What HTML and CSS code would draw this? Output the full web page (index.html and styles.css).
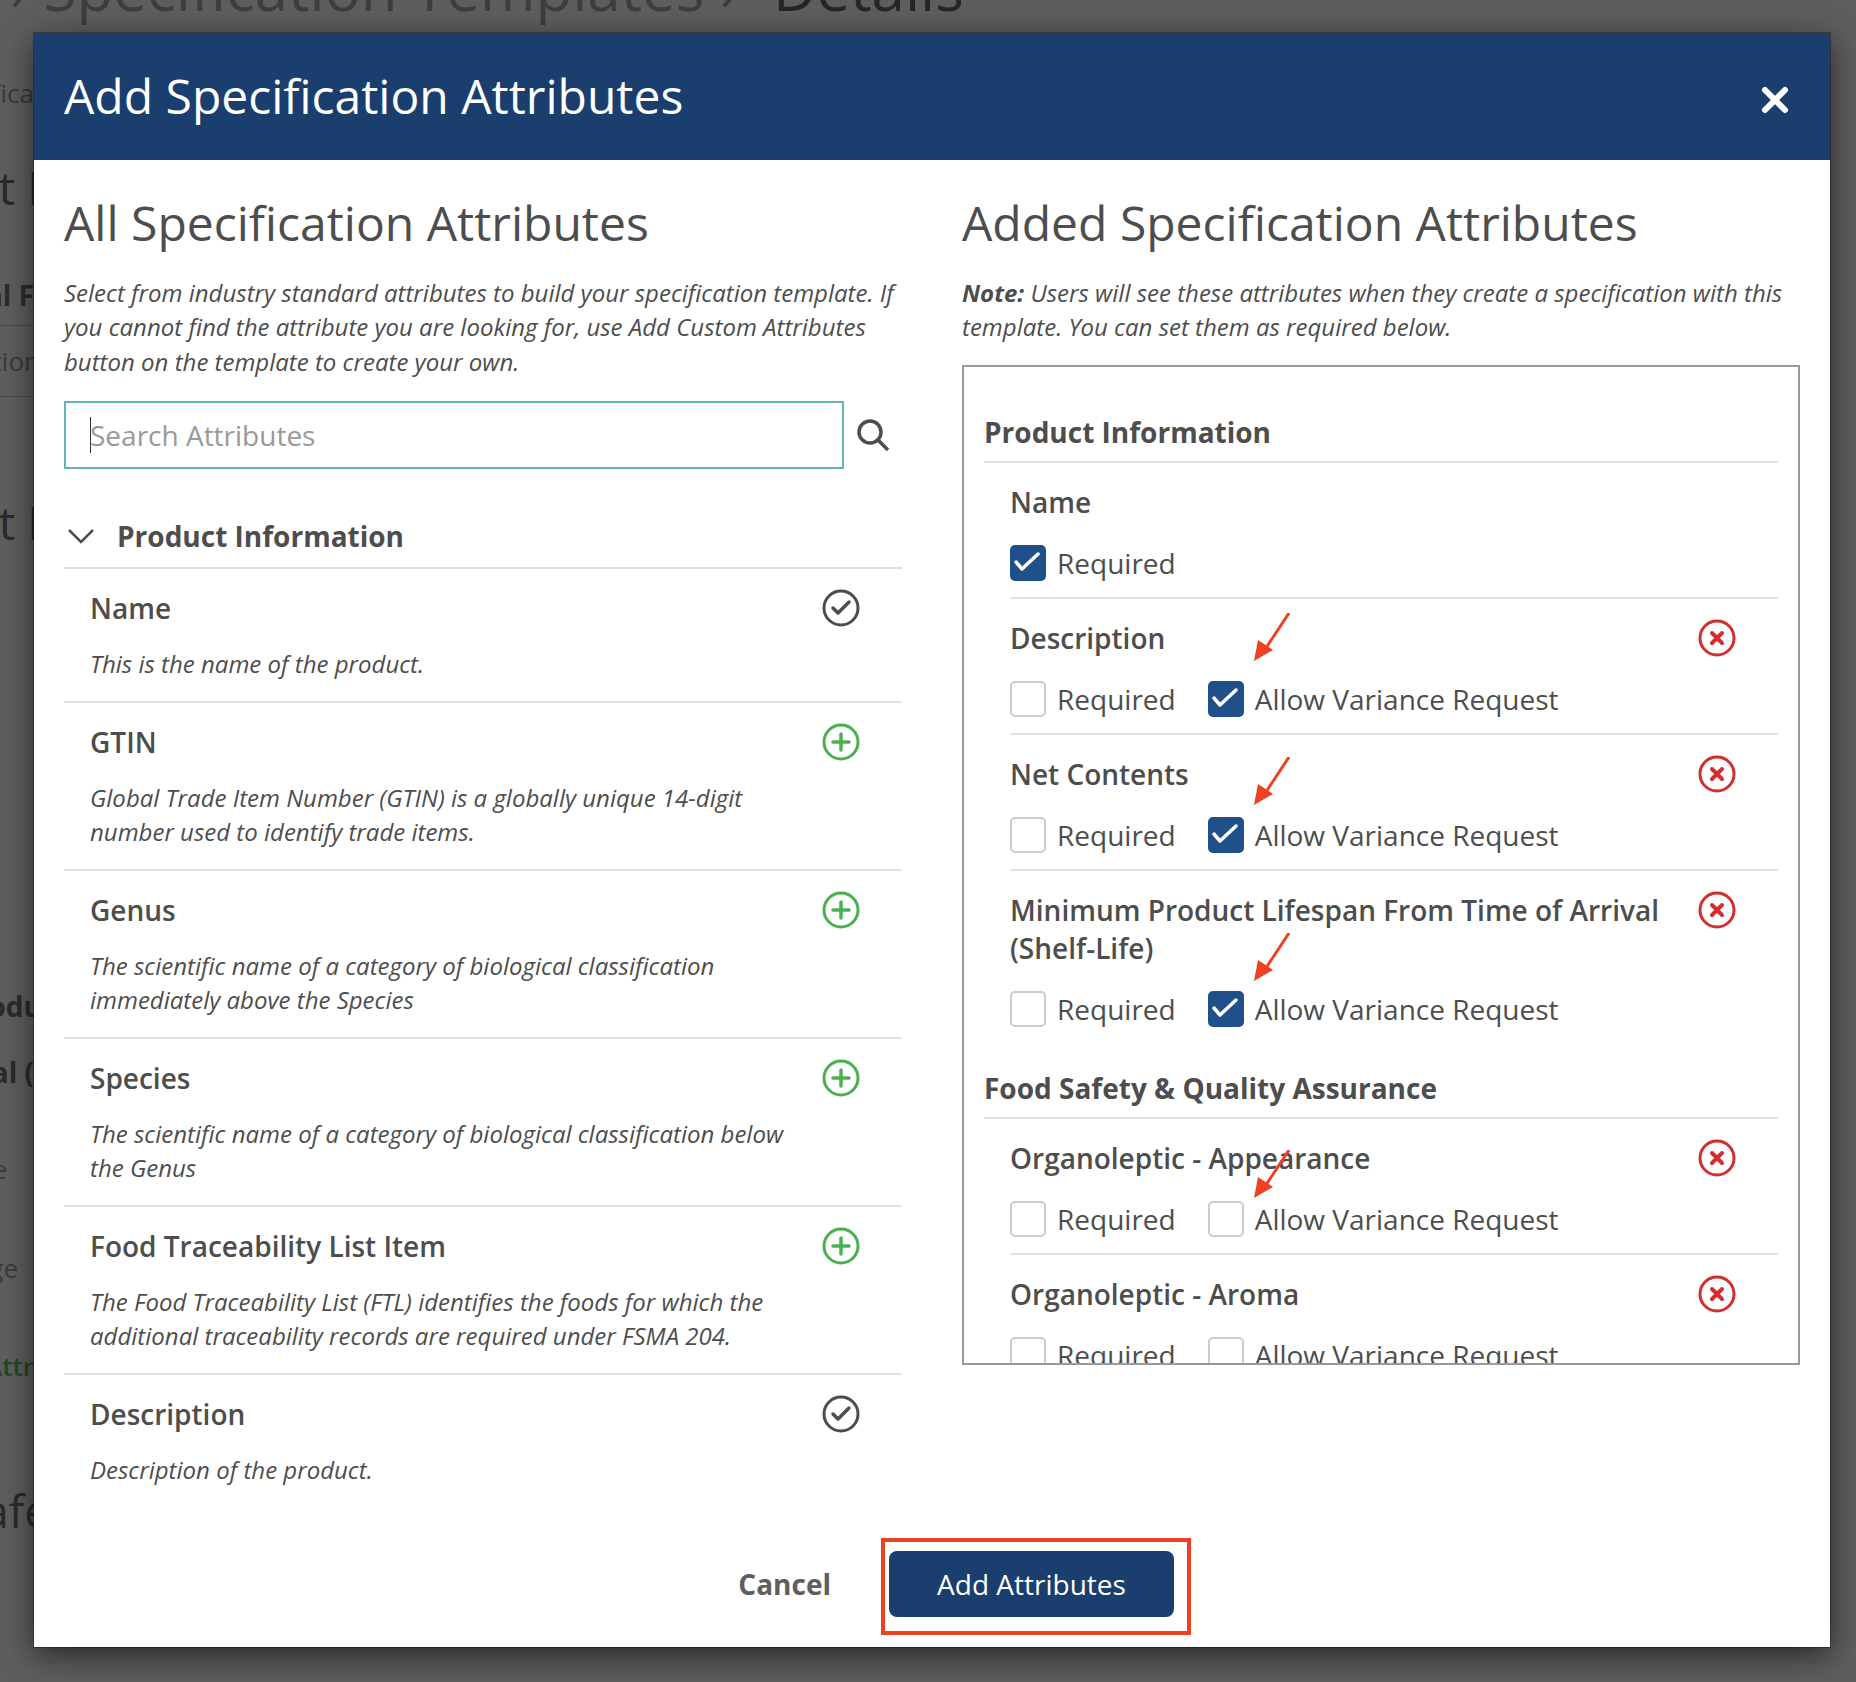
FILE: index.html
```html
<!DOCTYPE html>
<html lang="en">

<head>
    <meta charset="UTF-8">
    <title>Add Specification Attributes</title>
    <link rel="stylesheet" href="styles.css">
</head>

<body>

    <!-- Page behind the dialog -->
    <div class="page-top">
        <span class="crumb">› Specification Templates ›</span>
        <span class="crumb crumb-last">Details</span>
    </div>

    <div class="page-main">
        <div class="page-strip">
            <div class="strip-row strip-1">ifica</div>
            <div class="strip-row strip-2 strip-big">t I</div>
            <div class="strip-row strip-3 strip-bold">al F</div>
            <div class="strip-row strip-4">tion</div>
            <div class="strip-row strip-5 strip-big">t I</div>
            <div class="strip-row strip-6 strip-bold">odu</div>
            <div class="strip-row strip-7 strip-bold">al (</div>
            <div class="strip-row strip-8">e</div>
            <div class="strip-row strip-9">ge</div>
            <div class="strip-row strip-10 strip-green">Attr</div>
            <div class="strip-row strip-11 strip-big">afe</div>
        </div>

        <!-- Dialog -->
        <div class="modal">
            <div class="modal-header">
                <h1>Add Specification Attributes</h1>
                <svg class="close-icon" viewBox="0 0 28 28">
                    <path d="M4 4 L24 24 M24 4 L4 24" />
                </svg>
            </div>

            <div class="modal-body">
                <div class="column">
                    <h2>All Specification Attributes</h2>
                    <p class="intro">Select from industry standard attributes to build your specification template. If you cannot find the attribute you are looking for, use Add Custom Attributes button on the template to create your own.</p>

                    <div class="search-row">
                        <div class="search-box"><span class="caret"></span>Search Attributes</div>
                        <svg class="search-icon" viewBox="0 0 34 34">
                            <circle cx="14" cy="14" r="11" />
                            <path d="M22 22 L32 32" />
                        </svg>
                    </div>

                    <div class="group-title">
                        <svg class="chevron" viewBox="0 0 28 16">
                            <path d="M2 2 L14 14 L26 2" />
                        </svg>
                        <span>Product Information</span>
                    </div>

                    <div class="attr">
                        <div class="attr-text">
                            <div class="attr-name">Name</div>
                            <div class="attr-desc">This is the name of the product.</div>
                        </div>
                        <svg class="round-icon icon-added" viewBox="0 0 38 38">
                            <circle cx="19" cy="19" r="17" />
                            <path d="M11 19 L16 24 L27 13" />
                        </svg>
                    </div>
                    <div class="attr">
                        <div class="attr-text">
                            <div class="attr-name">GTIN</div>
                            <div class="attr-desc">Global Trade Item Number (GTIN) is a globally unique 14-digit number used to identify trade items.</div>
                        </div>
                        <svg class="round-icon icon-add" viewBox="0 0 38 38">
                            <circle cx="19" cy="19" r="17" />
                            <path d="M19 11 V27 M11 19 H27" />
                        </svg>
                    </div>
                    <div class="attr">
                        <div class="attr-text">
                            <div class="attr-name">Genus</div>
                            <div class="attr-desc">The scientific name of a category of biological classification immediately above the Species</div>
                        </div>
                        <svg class="round-icon icon-add" viewBox="0 0 38 38">
                            <circle cx="19" cy="19" r="17" />
                            <path d="M19 11 V27 M11 19 H27" />
                        </svg>
                    </div>
                    <div class="attr">
                        <div class="attr-text">
                            <div class="attr-name">Species</div>
                            <div class="attr-desc">The scientific name of a category of biological classification below the Genus</div>
                        </div>
                        <svg class="round-icon icon-add" viewBox="0 0 38 38">
                            <circle cx="19" cy="19" r="17" />
                            <path d="M19 11 V27 M11 19 H27" />
                        </svg>
                    </div>
                    <div class="attr">
                        <div class="attr-text">
                            <div class="attr-name">Food Traceability List Item</div>
                            <div class="attr-desc">The Food Traceability List (FTL) identifies the foods for which the additional traceability records are required under FSMA 204.</div>
                        </div>
                        <svg class="round-icon icon-add" viewBox="0 0 38 38">
                            <circle cx="19" cy="19" r="17" />
                            <path d="M19 11 V27 M11 19 H27" />
                        </svg>
                    </div>
                    <div class="attr attr-last">
                        <div class="attr-text">
                            <div class="attr-name">Description</div>
                            <div class="attr-desc">Description of the product.</div>
                        </div>
                        <svg class="round-icon icon-added" viewBox="0 0 38 38">
                            <circle cx="19" cy="19" r="17" />
                            <path d="M11 19 L16 24 L27 13" />
                        </svg>
                    </div>
                </div>

                <div class="column">
                    <h2>Added Specification Attributes</h2>
                    <p class="intro"><b>Note:</b> Users will see these attributes when they create a specification with this template. You can set them as required below.</p>

                    <div class="added-box">
                        <div class="added-group">Product Information</div>

                        <div class="added">
                            <div class="added-name">Name</div>
                            <div class="checks">
                                <span class="check check-on"><svg viewBox="0 0 32 32"><path d="M4 15 L10 22 L26 7" /></svg></span>
                                <span class="check-label">Required</span>
                            </div>
                        </div>

                        <div class="added">
                            <svg class="arrow" viewBox="0 0 36 48"><path class="arrow-line" d="M35 0 L10 38" /><path class="arrow-head" d="M0 48 L4 27 L19 37 Z" /></svg>
                            <div class="added-name">Description</div>
                            <svg class="round-icon icon-remove" viewBox="0 0 38 38"><circle cx="19" cy="19" r="17" /><path d="M14 14 L24 24 M24 14 L14 24" /></svg>
                            <div class="checks">
                                <span class="check"></span>
                                <span class="check-label">Required</span>
                                <span class="check check-on"><svg viewBox="0 0 32 32"><path d="M4 15 L10 22 L26 7" /></svg></span>
                                <span class="check-label">Allow Variance Request</span>
                            </div>
                        </div>

                        <div class="added">
                            <svg class="arrow arrow-low" viewBox="0 0 36 48"><path class="arrow-line" d="M35 0 L10 38" /><path class="arrow-head" d="M0 48 L4 27 L19 37 Z" /></svg>
                            <div class="added-name">Net Contents</div>
                            <svg class="round-icon icon-remove" viewBox="0 0 38 38"><circle cx="19" cy="19" r="17" /><path d="M14 14 L24 24 M24 14 L14 24" /></svg>
                            <div class="checks">
                                <span class="check"></span>
                                <span class="check-label">Required</span>
                                <span class="check check-on"><svg viewBox="0 0 32 32"><path d="M4 15 L10 22 L26 7" /></svg></span>
                                <span class="check-label">Allow Variance Request</span>
                            </div>
                        </div>

                        <div class="added added-end">
                            <svg class="arrow arrow-long" viewBox="0 0 36 48"><path class="arrow-line" d="M35 0 L10 38" /><path class="arrow-head" d="M0 48 L4 27 L19 37 Z" /></svg>
                            <div class="added-name">Minimum Product Lifespan From Time of Arrival (Shelf-Life)</div>
                            <svg class="round-icon icon-remove" viewBox="0 0 38 38"><circle cx="19" cy="19" r="17" /><path d="M14 14 L24 24 M24 14 L14 24" /></svg>
                            <div class="checks">
                                <span class="check"></span>
                                <span class="check-label">Required</span>
                                <span class="check check-on"><svg viewBox="0 0 32 32"><path d="M4 15 L10 22 L26 7" /></svg></span>
                                <span class="check-label">Allow Variance Request</span>
                            </div>
                        </div>

                        <div class="added-group">Food Safety &amp; Quality Assurance</div>

                        <div class="added">
                            <svg class="arrow arrow-top" viewBox="0 0 36 48"><path class="arrow-line" d="M35 0 L10 38" /><path class="arrow-head" d="M0 48 L4 27 L19 37 Z" /></svg>
                            <div class="added-name">Organoleptic - Appearance</div>
                            <svg class="round-icon icon-remove" viewBox="0 0 38 38"><circle cx="19" cy="19" r="17" /><path d="M14 14 L24 24 M24 14 L14 24" /></svg>
                            <div class="checks">
                                <span class="check"></span>
                                <span class="check-label">Required</span>
                                <span class="check"></span>
                                <span class="check-label">Allow Variance Request</span>
                            </div>
                        </div>

                        <div class="added">
                            <div class="added-name">Organoleptic - Aroma</div>
                            <svg class="round-icon icon-remove" viewBox="0 0 38 38"><circle cx="19" cy="19" r="17" /><path d="M14 14 L24 24 M24 14 L14 24" /></svg>
                            <div class="checks">
                                <span class="check"></span>
                                <span class="check-label">Required</span>
                                <span class="check"></span>
                                <span class="check-label">Allow Variance Request</span>
                            </div>
                        </div>
                    </div>
                </div>
            </div>

            <div class="modal-footer">
                <span class="cancel">Cancel</span>
                <span class="add-wrap">
                    <span class="add-button">Add Attributes</span>
                    <span class="red-frame"></span>
                </span>
            </div>
        </div>
    </div>

</body>

</html>
```

FILE: styles.css
```css
* {
    margin: 0;
    padding: 0;
    box-sizing: border-box;
}

body {
    font-family: 'Open Sans', 'Noto Sans', sans-serif;
    background: #5e5e5e;
    color: #4d4d4d;
    width: 1856px;
    height: 1682px;
    overflow: hidden;
}

/* background page */
.page-top {
    height: 33px;
    overflow: hidden;
    display: flex;
    gap: 35px;
    align-items: flex-end;
    padding-left: 10px;
    font-size: 60px;
    line-height: 60px;
    color: #3e3e3e;
}

.crumb {
    margin-bottom: 15px;
    white-space: nowrap;
}

.crumb-last {
    color: #262626;
}

.page-main {
    display: flex;
}

.page-strip {
    width: 34px;
    height: 1649px;
    overflow: hidden;
    display: flex;
    flex-direction: column;
    color: #3a3a3a;
    font-size: 26px;
    white-space: nowrap;
}

.strip-row {
    display: flex;
    justify-content: flex-end;
    line-height: 36px;
}

.strip-big {
    font-size: 46px;
    line-height: 60px;
    color: #2a2a2a;
}

.strip-bold {
    font-size: 28px;
    font-weight: 700;
    color: #2b2b2b;
}

.strip-green {
    color: #24471f;
    font-weight: 600;
}

.strip-1 { margin-top: 42px; }
.strip-2 { margin-top: 46px; margin-right: -6px; }
.strip-3 { margin-top: 60px; padding-bottom: 12px; border-bottom: 1px solid #4a4a4a; }
.strip-4 { margin-top: 17px; margin-right: -6px; padding-bottom: 17px; border-bottom: 1px solid #4a4a4a; }
.strip-5 { margin-top: 95px; margin-right: -6px; }
.strip-6 { margin-top: 436px; margin-right: -8px; }
.strip-7 { margin-top: 30px; }
.strip-8 { margin-top: 61px; margin-right: 27px; }
.strip-9 { margin-top: 63px; margin-right: 16px; }
.strip-10 { margin-top: 62px; }
.strip-11 { margin-top: 96px; margin-right: -16px; }

/* dialog */
.modal {
    width: 1796px;
    height: 1614px;
    background: #fff;
    box-shadow: 0 0 0 1px rgba(0, 0, 0, 0.3), 0 8px 30px rgba(0, 0, 0, 0.6);
    display: flex;
    flex-direction: column;
}

.modal-header {
    height: 127px;
    background: #1a3e6e;
    color: #fff;
    display: flex;
    align-items: center;
    justify-content: space-between;
    padding: 0 41px 2px 30px;
}

.modal-header h1 {
    font-size: 48px;
    font-weight: 400;
}

.close-icon {
    width: 28px;
    height: 28px;
    margin-top: 8px;
    fill: none;
    stroke: #fff;
    stroke-width: 6;
    stroke-linecap: round;
}

.modal-body {
    height: 1366px;
    display: flex;
    gap: 60px;
    padding: 31px 30px 0;
}

.column {
    width: 838px;
}

h2 {
    font-size: 48px;
    font-weight: 400;
    line-height: 64px;
    margin-bottom: 21px;
}

.intro {
    font-size: 24px;
    font-style: italic;
    line-height: 34.3px;
}

.search-row {
    display: flex;
    align-items: center;
    margin-top: 22px;
}

.search-box {
    width: 780px;
    height: 68px;
    border: 2px solid #5fb6b4;
    display: flex;
    align-items: center;
    padding-left: 24px;
    font-size: 28px;
    color: #999;
    position: relative;
}

.caret {
    position: absolute;
    left: 24px;
    top: 14px;
    width: 1px;
    height: 36px;
    background: #333;
}

.search-icon {
    width: 34px;
    height: 34px;
    margin-left: 12px;
    fill: none;
    stroke: #4d4d4d;
    stroke-width: 3.5;
}

.group-title {
    display: flex;
    align-items: center;
    height: 63px;
    margin-top: 37px;
    border-bottom: 2px solid #e0e0e0;
    font-size: 28px;
    font-weight: 700;
}

.chevron {
    width: 28px;
    height: 16px;
    margin: 0 22px 0 3px;
    fill: none;
    stroke: #4d4d4d;
    stroke-width: 2.5;
}

.attr {
    display: flex;
    justify-content: space-between;
    align-items: flex-start;
    padding: 20px 42px 20px 26px;
    border-bottom: 2px solid #e0e0e0;
}

.attr-last {
    border-bottom: none;
}

.attr-text {
    width: 700px;
}

.attr-name {
    font-size: 28px;
    font-weight: 600;
    line-height: 38px;
    margin-bottom: 20px;
}

.attr-desc {
    font-size: 24px;
    font-style: italic;
    line-height: 34px;
}

.round-icon {
    width: 38px;
    height: 38px;
    flex-shrink: 0;
    fill: none;
    stroke-width: 3;
    stroke-linecap: round;
    stroke-linejoin: round;
}

.icon-added {
    stroke: #4d4d4d;
}

.icon-added path {
    stroke-width: 3.5;
}

.icon-add {
    stroke: #4caf50;
}

.icon-add path {
    stroke-width: 3.5;
}

.icon-remove {
    stroke: #d32f2f;
}

.icon-remove path {
    stroke-width: 4;
}

/* added attributes box */
.added-box {
    margin-top: 20px;
    height: 1000px;
    border: 2px solid #999;
    overflow: hidden;
    padding: 46px 20px 0 20px;
}

.added-group {
    font-size: 28px;
    font-weight: 700;
    line-height: 38px;
    padding-bottom: 10px;
    border-bottom: 2px solid #e0e0e0;
}

.added {
    position: relative;
    margin-left: 26px;
    padding: 20px 42px 0 0;
    display: grid;
    grid-template-columns: 1fr 38px;
    border-bottom: 2px solid #e0e0e0;
}

.added-end {
    border-bottom: none;
    padding-bottom: 26px;
}

.added-name {
    font-size: 28px;
    font-weight: 600;
    line-height: 38px;
}

.checks {
    grid-column: 1 / 3;
    display: flex;
    align-items: center;
    height: 36px;
    margin: 24px 0 16px;
}

.check {
    width: 36px;
    height: 36px;
    border: 2px solid #ccc;
    border-radius: 5px;
    margin-right: 11px;
    flex-shrink: 0;
}

.check-on {
    background: #205089;
    border-color: #205089;
}

.check-on svg {
    display: block;
    width: 32px;
    height: 32px;
    fill: none;
    stroke: #fff;
    stroke-width: 3.5;
    stroke-linecap: round;
    stroke-linejoin: round;
}

.check-label {
    font-size: 28px;
    margin-right: 32px;
}

/* red annotations from the screenshot */
.arrow {
    position: absolute;
    left: 244px;
    top: 14px;
    width: 36px;
    height: 48px;
}

.arrow-low {
    top: 22px;
}

.arrow-long {
    top: 62px;
}

.arrow-top {
    top: 31px;
}

.arrow-line {
    stroke: #ee4022;
    stroke-width: 3;
    fill: none;
}

.arrow-head {
    fill: #ee4022;
}

.modal-footer {
    display: flex;
    justify-content: flex-end;
    align-items: center;
    height: 121px;
    padding: 0 656px 5px 0;
    gap: 58px;
}

.cancel {
    font-size: 28px;
    font-weight: 700;
    color: #5e5e5e;
}

.add-wrap {
    position: relative;
}

.add-button {
    display: block;
    width: 285px;
    height: 66px;
    line-height: 66px;
    text-align: center;
    background: #1a3e6e;
    color: #fff;
    border-radius: 8px;
    font-size: 28px;
}

.red-frame {
    position: absolute;
    left: -8px;
    top: -13px;
    width: 310px;
    height: 97px;
    border: 4px solid #ee4022;
}
```
